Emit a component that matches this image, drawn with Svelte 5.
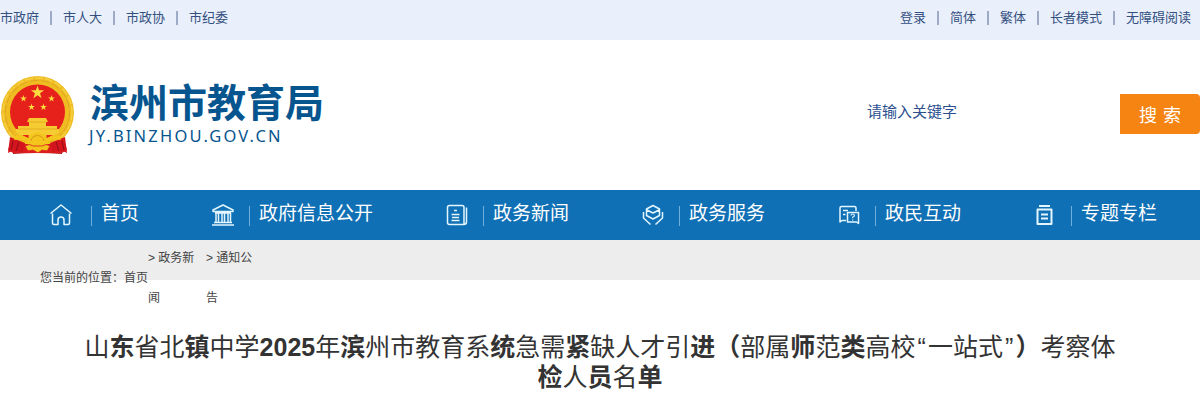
<script lang="ts">
  interface NavItem {
    label: string;
    icon: string;
  }

  const siteLinks = ['市政府', '市人大', '市政协', '市纪委'];
  const userLinks = ['登录', '简体', '繁体', '长者模式', '无障碍阅读'];

  const navItems: NavItem[] = [
    { label: '首页', icon: 'home' },
    { label: '政府信息公开', icon: 'hall' },
    { label: '政务新闻', icon: 'news' },
    { label: '政务服务', icon: 'service' },
    { label: '政民互动', icon: 'chat' },
    { label: '专题专栏', icon: 'topic' },
  ];

  const crumbs = ['政务新闻', '通知公告'];

  const title = '山东省北镇中学2025年滨州市教育系统急需紧缺人才引进（部属师范类高校“一站式”）考察体检人员名单';
  const heavy = /([东镇滨统紧进（师类）检员单0-9]+)/;
  const titleParts = title.split(/([东镇滨统紧进（师类）检员单0-9]+|[“”])/).filter(Boolean);

  const star = 'M0-1 .225-.309 .951-.309 .363.118 .588.809 0 .382-.588.809-.363.118-.951-.309-.225-.309Z';
</script>

<div class="topbar">
  <div class="links">
    {#each siteLinks as link}
      <a href="#top">{link}</a>
    {/each}
  </div>
  <div class="links">
    {#each userLinks as link}
      <a href="#top">{link}</a>
    {/each}
  </div>
</div>

<header class="header">
  <div class="brand">
    <svg class="emblem" viewBox="0 0 76 82" width="76" height="82" aria-hidden="true">
      <circle cx="37.5" cy="37.500" r="36.500" fill="#efbc22" />
      <circle cx="37.5" cy="37.500" r="32" fill="none" stroke="#dfa61e" stroke-width="1" stroke-dasharray="9 2" />
      <circle cx="37.5" cy="37.500" r="34.500" fill="none" stroke="#f6d043" stroke-width="1.500" stroke-dasharray="8 2" />
      <circle cx="37.5" cy="37" r="27.500" fill="#e6201b" />
      <g fill="#fbdc3e">
        <path d={star} transform="translate(37.5 17.500) scale(7)" />
        <path d={star} transform="translate(23.500 23.500) scale(3.600)" />
        <path d={star} transform="translate(51.500 23.500) scale(3.600)" />
        <path d={star} transform="translate(31.500 32) scale(3.600)" />
        <path d={star} transform="translate(43.500 32) scale(3.600)" />
      </g>
      <g fill="#f6cc32">
        <path d="M29 43h17l2 4h-2v4h11v3H18v-3h11v-4h-2z" />
        <path d="M16 54h43v3l-4 3H20l-4-3z" />
      </g>
      <path d="M28 47h19M18 54h39" stroke="#d99a16" stroke-width=".6" />
      <path d="M10 68q8-3 15 1h25q7-4 15-1l2 7-5 3H13l-5-3z" fill="#dc1d20" />
      <path d="M10 62l15 6-2 9-11-1-4 2 1-8zM65 62l-15 6 2 9 11-1 4 2-1-8z" fill="#d4151d" />
      <path d="M19 67l-3 9M13 66l-2 9M56 67l3 9M62 66l2 9" stroke="#8f0d16" stroke-width="1" />
      <path d="M14 63q7-2 15 3M61 63q-7-2-15 3" fill="none" stroke="#f3c51d" stroke-width="4" />
      <path d="M37.500 57l4 2 5 1v4l4 4-5 2-2 3h-12l-2-3-5-2 4-4v-4l5-1z" fill="#f3c51d" />
      <path d="M31 66a6.500 5.500 0 0 1 13 0" fill="none" stroke="#cf8d16" stroke-width=".8" />
      <path d="M25 71q5-3 8 0h9q4-3 8 0l-3 5-5-1-4 3-5-3-5 1z" fill="#f3c51d" stroke="#dc1d20" stroke-width=".8" />
      <path d="M13 78q24 2 49 0v1H13z" fill="#b5141b" />
    </svg>
    <div class="brand-text">
      <div class="brand-name">滨州市教育局</div>
      <div class="brand-url">JY.BINZHOU.GOV.CN</div>
    </div>
  </div>
  <form class="search">
    <input type="text" placeholder="请输入关键字" />
    <button type="button">搜 索</button>
  </form>
</header>

<nav class="nav">
  {#each navItems as item (item.icon)}
    <a class="nav-item" href="#top">
      <svg width="41" height="30" viewBox="0 0 41 30" aria-hidden="true">
        {#if item.icon === 'home'}
          <path d="M.5 13.500 11 5l10.500 8.500M2.500 13.500V23q0 1.500 1.500 1.500h4V20q0-3 3-3t3 3v4.500h4q1.500 0 1.500-1.500v-9.500" />
        {:else if item.icon === 'hall'}
          <path d="M5 11.500V10l10-5 10 5v1.500zM7 13h16M6 22.500h18M4 25h22M8 13v9M10.500 13v9M14 13v9M16.500 13v9M20 13v9M22.500 13v9" />
        {:else if item.icon === 'news'}
          <path d="M7.500 5.500H20q2 0 2 2v17H7.500q-2 0-2-2v-15q0-2 2-2zM24.500 7.500V22q0 2.500-3 2.500M12 10.500h3M9.500 14.500h8M10 17.500h7M9.500 20.500h8" />
        {:else if item.icon === 'service'}
          <path d="m15 5.500 6.500 3.500v6.500L15 19l-6.500-3.500V9zM9 10l6 3 6-3M5.500 12v6l7 6.500M24.500 12v6l-7 6.500" />
        {:else if item.icon === 'chat'}
          <path d="M12 20.500H8l-2 1.500V8q0-1.500 1.500-1.500h13Q22 6.500 22 8v3M9 10.500h5M9 14.500h2.500M13.500 12.500h11v11l-2-1.500h-9z" />
          <path stroke-width="1.200" d="M17 15.500q0-1.500 1.700-1.500t1.700 1.500-1.700 1.500v1.200M18.700 19.500v1" />
        {:else}
          <path stroke-width="2" d="M9 6h11M7.500 9.500h14V24h-14zM11 14.500h7M11 18.500h7" />
        {/if}
      </svg>
      <span>{item.label}</span>
    </a>
  {/each}
</nav>

<div class="position">
  <div class="crumbs">
    <span>您当前的位置：首页</span>
    {#each crumbs as crumb}
      <span class="crumb">&gt; {crumb}</span>
    {/each}
  </div>
</div>

<h1 class="title">
  {#each titleParts as part}<span class:heavy={heavy.test(part)} class:quote={part === '“' || part === '”'}>{part}</span>{/each}
</h1>

<style>
  :global(body) {
    background: #fff;
    font-family: 'Liberation Sans', 'Noto Sans CJK SC', sans-serif;
  }

  a {
    color: inherit;
    text-decoration: none;
  }

  .topbar {
    display: flex;
    justify-content: space-between;
    height: 40px;
    padding-right: 9px;
    box-sizing: border-box;
    background: #e9effb;
    color: #34507f;
    font-size: 13px;
    line-height: 36px;
  }

  .links {
    display: flex;
    height: 36px;
  }

  .links a {
    display: flex;
    align-items: center;
  }

  .links a + a::before {
    content: '';
    width: 2px;
    height: 14px;
    margin: 0 11px;
    background: #9dabc6;
  }

  .header {
    display: flex;
    justify-content: space-between;
    height: 150px;
  }

  .brand {
    display: flex;
    padding-top: 35px;
  }

  .brand-text {
    padding: 4px 0 0 14px;
    color: #07558f;
  }

  .brand-name {
    font-size: 39px;
    font-weight: 700;
    line-height: 50px;
    white-space: nowrap;
  }

  .brand-url {
    margin-left: -1px;
    font-family: 'Noto Sans', sans-serif;
    font-size: 16.5px;
    line-height: 14px;
    letter-spacing: 2.2px;
  }

  .search {
    display: flex;
    height: 40px;
    margin: 54px 0 0;
  }

  .search input {
    width: 253px;
    height: 34px;
    padding: 0;
    border: 0;
    outline: 0;
    background: none;
    font: 15px 'Liberation Sans', 'Noto Sans CJK SC', sans-serif;
  }

  .search input::placeholder {
    color: #2c4f8f;
    opacity: 1;
  }

  .search button {
    width: 80px;
    padding: 0;
    border: 0;
    border-radius: 0 4px 4px 0;
    background: #f58412;
    color: #fff;
    font: 18px 'Liberation Sans', 'Noto Sans CJK SC', sans-serif;
    word-spacing: 1px;
  }

  .nav {
    display: flex;
    height: 50px;
    padding-left: 50px;
    background: #1070b5;
    color: #fff;
    overflow: hidden;
  }

  .nav-item {
    display: flex;
    flex-shrink: 0;
    margin-right: 69px;
    font-size: 19px;
    line-height: 48px;
  }

  .nav-item svg {
    margin-top: 10px;
    fill: none;
    stroke: #e3f6ff;
    stroke-width: 1.5;
    stroke-linejoin: round;
  }

  .nav-item span::before {
    content: '';
    display: inline-block;
    width: 1px;
    height: 20px;
    margin-right: 9px;
    vertical-align: -6px;
    background: #71b0dc;
  }

  .position {
    height: 40px;
    background: #ededed;
  }

  .crumbs {
    display: flex;
    align-items: center;
    height: 76px;
    padding-left: 40px;
    color: #444;
    font-size: 12px;
    line-height: 40px;
  }

  .crumb {
    width: 48px;
    margin-right: 10px;
  }

  .title {
    width: 1040px;
    margin: 52px auto 0;
    color: #333;
    font-size: 25px;
    font-weight: 400;
    line-height: 30px;
    text-align: center;
  }

  .heavy {
    font-weight: 700;
  }

  .quote {
    display: inline-block;
    width: 0.5em;
  }
</style>
